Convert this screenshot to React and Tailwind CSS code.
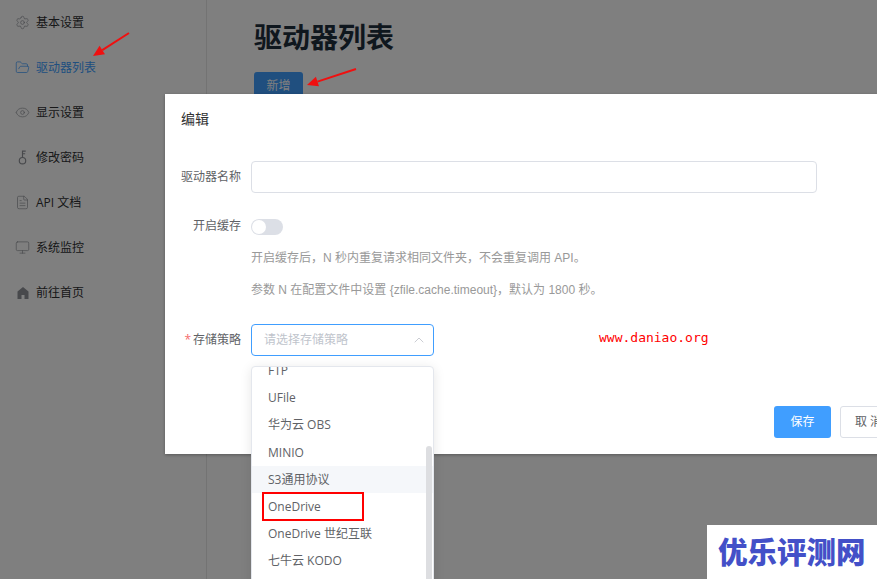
import React from "react";
import { Settings, FolderOpen, Eye, FileText, Monitor, ChevronUp } from "lucide-react";

const FONT = "font-['Open_Sans','Noto_Sans_CJK_SC',sans-serif]";
const HELP = "font-['Liberation_Sans','Noto_Sans_CJK_SC',sans-serif]";

const KeyIcon = () => (
  <svg width="15" height="15" viewBox="0 0 14 14" fill="none" stroke="currentColor" strokeWidth="1.1">
    <circle cx="7" cy="10" r="3" />
    <path d="M7 7V1H10M7 3.5H9.5" />
  </svg>
);
const HomeIcon = () => (
  <svg width="14" height="14" viewBox="0 0 14 14" fill="currentColor">
    <path d="M7 1 1.5 5.5V13H5.5V9H8.5V13H12.5V5.5Z" />
  </svg>
);

const nav = [
  [<Settings size={15} strokeWidth={1.1} />, "基本设置"],
  [<FolderOpen size={15} strokeWidth={1.2} />, "驱动器列表", true],
  [<Eye size={15} strokeWidth={1.1} />, "显示设置"],
  [<KeyIcon />, "修改密码"],
  [<FileText size={15} strokeWidth={1.1} />, "API 文档"],
  [<Monitor size={15} strokeWidth={1.1} />, "系统监控"],
  [<HomeIcon />, "前往首页"],
];

const options = ["FTP", "UFile", "华为云 OBS", "MINIO", "S3通用协议", "OneDrive", "OneDrive 世纪互联", "七牛云 KODO", "阿里云 OSS"];

const Arrow = ({ className, x1, y1, x2, y2, w, h }) => {
  const a = Math.atan2(y2 - y1, x2 - x1);
  const l = 11, s = 5;
  const bx = x2 - l * Math.cos(a), by = y2 - l * Math.sin(a);
  const px = -Math.sin(a) * s, py = Math.cos(a) * s;
  return (
    <svg className={className} width={w} height={h}>
      <line x1={x1} y1={y1} x2={bx} y2={by} stroke="#f01010" strokeWidth="2" />
      <polygon points={`${x2},${y2} ${bx + px},${by + py} ${bx - px},${by - py}`} fill="#f01010" />
    </svg>
  );
};

export default function App() {
  return (
    <div className={`relative w-[877px] h-[579px] overflow-hidden bg-white ${FONT}`}>
      <div className="flex h-full">
        <aside className="w-[207px] shrink-0 border-r border-[#e6e6e6] flex flex-col">
          {nav.map(([icon, label, active]) => (
            <div key={label} className={`h-[45px] shrink-0 flex items-center pl-[15px] gap-[6px] text-[12px] ${active ? "text-[#409eff]" : "text-[#303133]"}`}>
              <span className={`w-[15px] flex justify-center ${active ? "text-[#409eff]" : "text-[#909399]"}`}>{icon}</span>
              <span>{label}</span>
            </div>
          ))}
        </aside>
        <main className="pl-[47px] pt-[17px]">
          <h1 className="text-[28px] leading-[40px] font-bold text-[#1f2f3d]">驱动器列表</h1>
          <button className="mt-[15px] w-[49px] h-[28px] rounded-[3px] bg-[#409eff] text-white text-[12px]">新增</button>
        </main>
      </div>

      <div className="absolute inset-0 bg-black/50" />

      <Arrow className="absolute left-[85px] top-[28px]" w={50} h={32} x1={44} y1={5} x2={8} y2={28} />
      <Arrow className="absolute left-[300px] top-[64px]" w={60} h={26} x1={56} y1={5} x2={7} y2={21} />

      <section className="absolute left-[165px] top-[94px] w-[800px] h-[360px] bg-white shadow-[0_1px_3px_rgba(0,0,0,0.3)] text-[12px]">
        <div className="pl-[16px] pt-[15px] text-[14px] leading-[20px] text-[#303133]">编辑</div>
        <div className="pl-[16px] pt-[32px] flex flex-col">
          <div className="flex items-center h-[32px]">
            <label className="w-[60px] text-right text-[#606266] -mt-[1px]">驱动器名称</label>
            <div className="ml-[10px] w-[566px] h-[32px] rounded-[4px] border border-[#dcdfe6]" />
          </div>
          <div className="flex items-center h-[16px] mt-[26px]">
            <label className="w-[60px] text-right text-[#606266] whitespace-nowrap -mt-[2px]">开启缓存</label>
            <div className="ml-[10px] w-[32px] h-[16px] rounded-full bg-[#dcdfe6] p-[1px]">
              <div className="w-[14px] h-[14px] rounded-full bg-white" />
            </div>
          </div>
          <p className={`ml-[70px] mt-[15px] h-[16px] leading-[16px] text-[#999999] whitespace-nowrap ${HELP}`}>开启缓存后，N 秒内重复请求相同文件夹，不会重复调用 API。</p>
          <p className={`ml-[70px] mt-[16px] h-[16px] leading-[16px] text-[#999999] whitespace-nowrap ${HELP}`}>参数 N 在配置文件中设置 {"{zfile.cache.timeout}"}，默认为 1800 秒。</p>
          <div className="flex items-center h-[32px] mt-[26px]">
            <label className="w-[60px] text-right text-[#606266] whitespace-nowrap -mt-[1px]"><span className="text-[#f56c6c] mr-[2px]">*</span>存储策略</label>
            <div className="ml-[10px] w-[183px] h-[32px] rounded-[4px] border border-[#409eff] flex items-center justify-between pl-[12px] pr-[6px]">
              <span className="text-[#c0c4cc]">请选择存储策略</span>
              <ChevronUp size={16} strokeWidth={1} className="text-[#b0b4bc]" />
            </div>
          </div>
          <div className="flex mt-[50px] pl-[593px] gap-[9px]">
            <button className="w-[57px] h-[32px] shrink-0 rounded-[3px] bg-[#409eff] text-white">保存</button>
            <button className="w-[57px] h-[32px] shrink-0 rounded-[3px] border border-[#dcdfe6] text-[#606266]">取 消</button>
          </div>
        </div>
      </section>

      <div className="absolute left-[599px] top-[330px] text-[13px] leading-[16px] text-[#ff0000] font-['DejaVu_Sans_Mono',monospace]">www.daniao.org</div>

      <div className="absolute left-[251px] top-[366px] w-[183px] h-[260px] bg-white border border-[#e4e7ed] rounded-[4px] shadow-[0_2px_12px_rgba(0,0,0,0.1)] overflow-hidden text-[12px] text-[#606266]">
        <div className="-mt-[10px]">
          {options.map((o) => (
            <div key={o} className={`h-[27.2px] leading-[27px] pl-[16px] whitespace-nowrap ${o.startsWith("S3") ? "bg-[#f5f7fa]" : ""}`}>{o}</div>
          ))}
        </div>
        <div className="absolute right-[1px] top-[79px] w-[6px] h-[140px] rounded-full bg-[#dddee1]" />
      </div>

      <div className="absolute left-[262px] top-[492px] w-[102px] h-[29px] border-2 border-[#ff0000]" />

      <div className="absolute left-[707px] top-[525px] w-[170px] h-[54px] bg-white flex items-center pl-[11px] pb-[4px]">
        <span className="text-[29.5px] leading-[40px] font-black text-[#4350c8] whitespace-nowrap font-['Noto_Sans_CJK_SC',sans-serif]">优乐评测网</span>
      </div>
    </div>
  );
}
